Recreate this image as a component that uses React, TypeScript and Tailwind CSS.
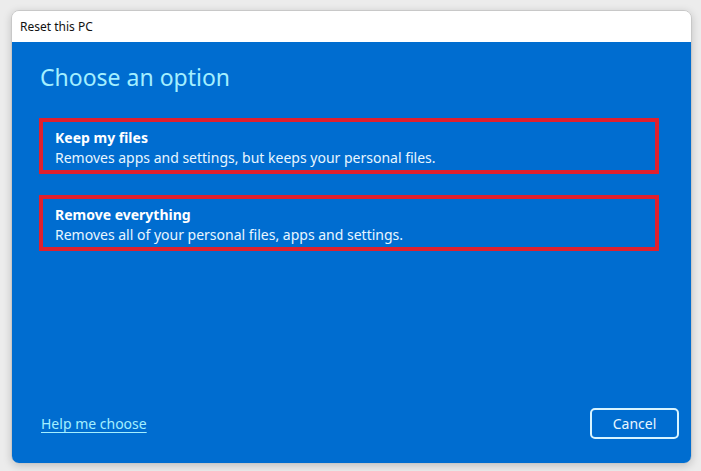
const options = [
  {
    title: "Keep my files",
    desc: "Removes apps and settings, but keeps your personal files.",
  },
  {
    title: "Remove everything",
    desc: "Removes all of your personal files, apps and settings.",
  },
];

const App = () => {
  return (
    <div
      className="w-[701px] h-[471px] bg-[#ececec] pt-[10px] pl-[11px]"
      style={{ fontFamily: '"Noto Sans", "Open Sans", sans-serif' }}
    >
      <div className="w-[681px] h-[454px] flex flex-col rounded-[8px] overflow-hidden border border-[#c8c8c8] shadow-[0_2px_8px_rgba(0,0,0,0.18)]">
        <div className="h-[31px] bg-white flex items-center pl-[8px] text-[12px] text-[#111]">
          Reset this PC
        </div>
        <div className="flex-1 bg-[#006dd0] flex flex-col pl-[28px] pr-[12px] pt-[20px] pb-[24px]">
          <h1 className="text-[23px] leading-[30px] text-[#a4efff] font-normal">
            Choose an option
          </h1>
          <div className="flex flex-col gap-[21px] mt-[26px] pr-[20px] -ml-[1px]">
            {options.map((o) => (
              <div
                key={o.title}
                className="border-[4px] border-[#e0202e] h-[56px] pl-[12px] pt-[6px] flex flex-col"
              >
                <span className="text-[14px] leading-[20px] font-bold text-white">
                  {o.title}
                </span>
                <span className="text-[14px] leading-[20px] text-[#e8f6ff]">
                  {o.desc}
                </span>
              </div>
            ))}
          </div>
          <div className="flex-1"></div>
          <div className="flex items-center justify-between">
            <span className="text-[14px] text-[#a4efff] underline underline-offset-[3px] ml-[1px]">
              Help me choose
            </span>
            <button className="w-[89px] h-[31px] border-[2px] border-[#d8f4ff] rounded-[5px] text-[14px] text-[#e8f6ff]">
              Cancel
            </button>
          </div>
        </div>
      </div>
    </div>
  );
};

export default App;
